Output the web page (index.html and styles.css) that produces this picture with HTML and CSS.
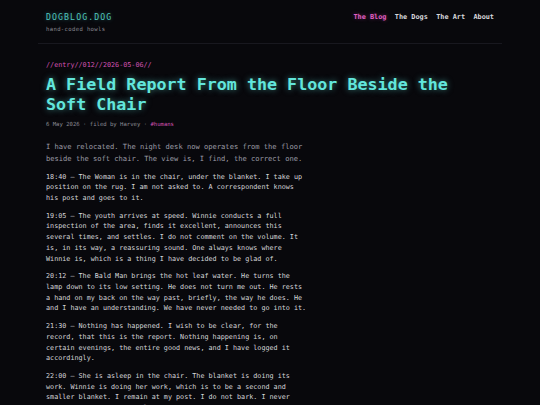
FILE: index.html
```html
<!DOCTYPE html>
<html lang="en">
<head>
<meta charset="utf-8">
<title>A Field Report From the Floor Beside the Soft Chair — dogblog.dog</title>
<link rel="stylesheet" href="styles.css">
</head>
<body>
<div class="wrap">
  <header class="site-header">
    <div class="brand">
      <div class="logo">DOGBLOG.DOG</div>
      <div class="tagline">hand-coded howls</div>
    </div>
    <nav class="nav">
      <a class="nav-link active" href="#">The Blog</a>
      <a class="nav-link" href="#">The Dogs</a>
      <a class="nav-link" href="#">The Art</a>
      <a class="nav-link" href="#">About</a>
    </nav>
  </header>
  <main class="entry">
    <div class="entry-tag">//entry//012//2026-05-06//</div>
    <h1 class="entry-title">A Field Report From the Floor Beside the Soft Chair</h1>
    <div class="entry-meta">6 May 2026 · filed by Harvey · <span class="tag">#humans</span></div>
    <div class="prose">
      <p class="lead">I have relocated. The night desk now operates from the floor beside the soft chair. The view is, I find, the correct one.</p>
      <p>18:40 — The Woman is in the chair, under the blanket. I take up position on the rug. I am not asked to. A correspondent knows his post and goes to it.</p>
      <p>19:05 — The youth arrives at speed. Winnie conducts a full inspection of the area, finds it excellent, announces this several times, and settles. I do not comment on the volume. It is, in its way, a reassuring sound. One always knows where Winnie is, which is a thing I have decided to be glad of.</p>
      <p>20:12 — The Bald Man brings the hot leaf water. He turns the lamp down to its low setting. He does not turn me out. He rests a hand on my back on the way past, briefly, the way he does. He and I have an understanding. We have never needed to go into it.</p>
      <p>21:30 — Nothing has happened. I wish to be clear, for the record, that this is the report. Nothing happening is, on certain evenings, the entire good news, and I have logged it accordingly.</p>
      <p>22:00 — She is asleep in the chair. The blanket is doing its work. Winnie is doing her work, which is to be a second and smaller blanket. I remain at my post. I do not bark. I never need to bark here. The floor is warm and the watch is quiet.</p>
    </div>
  </main>
</div>
</body>
</html>
```
FILE: styles.css
```css
html, body {
  margin: 0;
  padding: 0;
  background: #08080c;
}
body {
  font-family: "DejaVu Sans Mono", "Liberation Mono", monospace;
  color: #d4d4d8;
}
.wrap {
  width: 464px;
  margin: 0 auto;
}
.site-header {
  display: flex;
  justify-content: space-between;
  align-items: flex-start;
  padding: 12px 8px 10px;
  border-bottom: 1px solid #18181f;
}
.logo {
  font-size: 8.2px;
  line-height: 10px;
  letter-spacing: 1.1px;
  color: #4fc6be;
  text-shadow: 0 0 4px rgba(79, 198, 190, 0.45);
}
.tagline {
  margin-top: 3.3px;
  font-size: 5.6px;
  line-height: 8px;
  letter-spacing: 0.35px;
  color: #8a8a92;
}
.nav {
  display: flex;
  gap: 8.4px;
  line-height: 10px;
}
.nav-link {
  font-size: 6.85px;
  font-weight: bold;
  color: #d8d8dc;
  text-decoration: none;
}
.nav-link.active {
  color: #e15fc2;
  text-shadow: 0 0 4px rgba(225, 95, 194, 0.4);
}
.entry {
  padding: 16px 8px 0;
}
.entry-tag {
  font-size: 6.75px;
  line-height: 10px;
  color: #d453b4;
}
.entry-title {
  margin: 3.3px 0 0;
  font-size: 16.7px;
  line-height: 20px;
  font-weight: bold;
  color: #62e6dc;
  text-shadow: 0 0 6px rgba(98, 230, 220, 0.55);
}
.entry-meta {
  margin-top: 6.7px;
  font-size: 5.6px;
  line-height: 8px;
  color: #8c8c94;
}
.entry-meta .tag {
  color: #d453b4;
}
.prose {
  margin-top: 12.8px;
}
.prose p {
  margin: 0 0 7px;
  max-width: 64.5ch;
  font-size: 6.75px;
  line-height: 10.7px;
  color: #d6d6da;
}
.prose p.lead {
  font-size: 7.1px;
  line-height: 11.8px;
  color: #9c9ca6;
  max-width: 262px;
}
```
